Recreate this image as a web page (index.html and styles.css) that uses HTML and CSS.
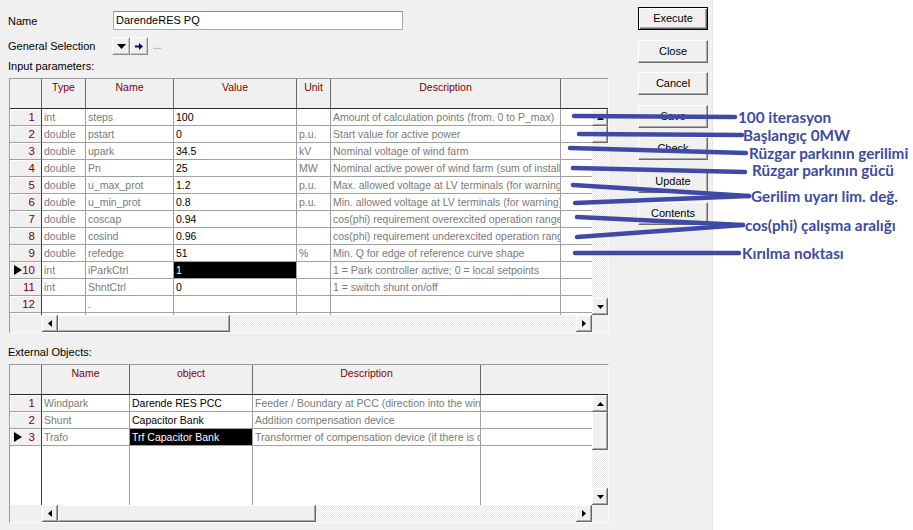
FILE: index.html
```html
<!DOCTYPE html>
<html>
<head>
<meta charset="utf-8">
<link rel="stylesheet" href="styles.css">
</head>
<body>
<div class="screen">
  <div class="dialog">
    <div class="main">
      <div class="name-row">
        <span class="lbl">Name</span>
        <div class="input">DarendeRES PQ</div>
      </div>
      <div class="sel-row">
        <span class="lbl lbl-sel">General Selection</span>
        <span class="tbtn"><svg width="9" height="5" viewBox="0 0 9 5"><polygon points="0,0 9,0 4.5,5" fill="#000"/></svg></span>
        <span class="tbtn"><svg width="8" height="7" viewBox="0 0 8 7"><rect x="0" y="2.5" width="5" height="2" fill="#000080"/><polygon points="4,0 8,3.5 4,7" fill="#000080"/></svg></span>
        <span class="dots">...</span>
      </div>
      <div class="section-lbl">Input parameters:</div>

      <div class="grid">
        <div class="hdr hdr-top">
          <div class="h"></div><div class="h">Type</div><div class="h">Name</div><div class="h">Value</div><div class="h">Unit</div><div class="h">Description</div><div class="h last"></div>
        </div>
        <div class="body body-top">
          <div class="cells cells-top">
            <div class="c n">1</div><div class="c">int</div><div class="c">steps</div><div class="c v">100</div><div class="c"></div><div class="c">Amount of calculation points (from. 0 to P_max)</div><div class="c e"></div>
            <div class="c n">2</div><div class="c">double</div><div class="c">pstart</div><div class="c v">0</div><div class="c">p.u.</div><div class="c">Start value for active power</div><div class="c e"></div>
            <div class="c n">3</div><div class="c">double</div><div class="c">upark</div><div class="c v">34.5</div><div class="c">kV</div><div class="c">Nominal voltage of wind farm</div><div class="c e"></div>
            <div class="c n">4</div><div class="c">double</div><div class="c">Pn</div><div class="c v">25</div><div class="c">MW</div><div class="c">Nominal active power of wind farm (sum of installed units)</div><div class="c e"></div>
            <div class="c n">5</div><div class="c">double</div><div class="c">u_max_prot</div><div class="c v">1.2</div><div class="c">p.u.</div><div class="c">Max. allowed voltage at LV terminals (for warning)</div><div class="c e"></div>
            <div class="c n">6</div><div class="c">double</div><div class="c">u_min_prot</div><div class="c v">0.8</div><div class="c">p.u.</div><div class="c">Min. allowed voltage at LV terminals (for warning)</div><div class="c e"></div>
            <div class="c n">7</div><div class="c">double</div><div class="c">coscap</div><div class="c v">0.94</div><div class="c"></div><div class="c">cos(phi) requirement overexcited operation range</div><div class="c e"></div>
            <div class="c n">8</div><div class="c">double</div><div class="c">cosind</div><div class="c v">0.96</div><div class="c"></div><div class="c">cos(phi) requirement underexcited operation range</div><div class="c e"></div>
            <div class="c n">9</div><div class="c">double</div><div class="c">refedge</div><div class="c v">51</div><div class="c">%</div><div class="c">Min. Q for edge of reference curve shape</div><div class="c e"></div>
            <div class="c n"><i class="mark"></i>10</div><div class="c">int</div><div class="c">iParkCtrl</div><div class="c v sel">1</div><div class="c"></div><div class="c">1 = Park controller active; 0 = local setpoints</div><div class="c e"></div>
            <div class="c n">11</div><div class="c">int</div><div class="c">ShntCtrl</div><div class="c v">0</div><div class="c"></div><div class="c">1 = switch shunt on/off</div><div class="c e"></div>
            <div class="c n">12</div><div class="c"></div><div class="c">.</div><div class="c v"></div><div class="c"></div><div class="c"></div><div class="c e"></div>
            <div class="c n"></div><div class="c"></div><div class="c"></div><div class="c v"></div><div class="c"></div><div class="c"></div><div class="c e"></div>
          </div>
          <div class="vs">
            <div class="sb"><svg width="7" height="4" viewBox="0 0 7 4"><polygon points="0,4 7,4 3.5,0" fill="#000"/></svg></div>
            <div class="sb thumb-v1"></div>
            <div class="track"></div>
            <div class="sb"><svg width="7" height="4" viewBox="0 0 7 4"><polygon points="0,0 7,0 3.5,4" fill="#000"/></svg></div>
          </div>
        </div>
        <div class="hs">
          <div class="blank"></div>
          <div class="sb sbh"><svg width="4" height="7" viewBox="0 0 4 7"><polygon points="4,0 4,7 0,3.5" fill="#000"/></svg></div>
          <div class="sb sbh thumb-h1"></div>
          <div class="track"></div>
          <div class="sb sbh"><svg width="4" height="7" viewBox="0 0 4 7"><polygon points="0,0 0,7 4,3.5" fill="#000"/></svg></div>
          <div class="corner"></div>
        </div>
      </div>

      <div class="section-lbl ext">External Objects:</div>

      <div class="grid">
        <div class="hdr hdr-bot">
          <div class="h"></div><div class="h">Name</div><div class="h">object</div><div class="h">Description</div><div class="h last"></div>
        </div>
        <div class="body body-bot">
          <div class="cells cells-bot">
            <div class="c n">1</div><div class="c">Windpark</div><div class="c v">Darende RES PCC</div><div class="c">Feeder / Boundary at PCC (direction into the wind farm)</div><div class="c e"></div>
            <div class="c n">2</div><div class="c">Shunt</div><div class="c v">Capacitor Bank</div><div class="c">Addition compensation device</div><div class="c e"></div>
            <div class="c n"><i class="mark"></i>3</div><div class="c">Trafo</div><div class="c v sel">Trf Capacitor Bank</div><div class="c">Transformer of compensation device (if there is one)</div><div class="c e"></div>
            <div class="c f fn"></div><div class="c f"></div><div class="c f"></div><div class="c f"></div><div class="c f e"></div>
          </div>
          <div class="vs">
            <div class="sb"><svg width="7" height="4" viewBox="0 0 7 4"><polygon points="0,4 7,4 3.5,0" fill="#000"/></svg></div>
            <div class="sb thumb-v2"></div>
            <div class="track"></div>
            <div class="sb"><svg width="7" height="4" viewBox="0 0 7 4"><polygon points="0,0 7,0 3.5,4" fill="#000"/></svg></div>
          </div>
        </div>
        <div class="hs">
          <div class="blank"></div>
          <div class="sb sbh"><svg width="4" height="7" viewBox="0 0 4 7"><polygon points="4,0 4,7 0,3.5" fill="#000"/></svg></div>
          <div class="sb sbh thumb-h2"></div>
          <div class="track"></div>
          <div class="sb sbh"><svg width="4" height="7" viewBox="0 0 4 7"><polygon points="0,0 0,7 4,3.5" fill="#000"/></svg></div>
          <div class="corner"></div>
        </div>
      </div>
    </div>

    <div class="buttons">
      <div class="btn default">Execute</div>
      <div class="btn">Close</div>
      <div class="btn">Cancel</div>
      <div class="btn">Save</div>
      <div class="btn">Check</div>
      <div class="btn">Update</div>
      <div class="btn">Contents</div>
    </div>
  </div>

  <svg class="annot" width="913" height="530" viewBox="0 0 913 530">
    <g stroke="#3f4aa6" stroke-width="4.5" stroke-linecap="round" fill="none">
      <line x1="574" y1="116" x2="735" y2="117"/>
      <line x1="579" y1="134" x2="742" y2="135"/>
      <line x1="570" y1="148" x2="746" y2="153"/>
      <line x1="573" y1="168" x2="745" y2="172"/>
      <line x1="573" y1="185" x2="749" y2="196"/>
      <line x1="575" y1="203" x2="749" y2="196"/>
      <line x1="577" y1="217" x2="743" y2="225"/>
      <line x1="577" y1="237" x2="743" y2="225"/>
      <line x1="575" y1="253" x2="739" y2="253"/>
    </g>
    <g class="annot-text" fill="#3d4aa3">
      <text x="738" y="117">100 iterasyon</text>
      <text x="743" y="135">Başlangıç 0MW</text>
      <text x="749" y="153">Rüzgar parkının gerilimi</text>
      <text x="752" y="170">Rüzgar parkının gücü</text>
      <text x="751" y="196">Gerilim uyarı lim. değ.</text>
      <text x="745" y="225">cos(phi) çalışma aralığı</text>
      <text x="742" y="253">Kırılma noktası</text>
    </g>
  </svg>
</div>
</body>
</html>
```

FILE: styles.css
```css
* { box-sizing: border-box; }

body {
  margin: 0;
  background: #fff;
  font-family: "Liberation Sans", Arial, sans-serif;
  font-size: 10.5px;
  color: #000;
}

.screen {
  position: relative;
  width: 913px;
  height: 530px;
  overflow: hidden;
}

.dialog {
  width: 713px;
  height: 530px;
  background: #f0f0f0;
  display: flex;
  border-right: 1px solid #e6e6e6;
}

.main {
  width: 638px;
  flex: none;
  padding: 11px 0 0 9px;
  display: flex;
  flex-direction: column;
}

.name-row {
  display: flex;
  align-items: center;
  height: 19px;
}

.lbl {
  width: 105px;
  margin-left: -1px;
  flex: none;
  font-size: 11px;
}

.input {
  width: 290px;
  height: 19px;
  background: #fff;
  border: 1px solid #a9a9a9;
  border-top-color: #8a8a8a;
  padding-left: 2px;
  line-height: 17px;
  font-size: 11px;
}

.sel-row {
  display: flex;
  align-items: center;
  height: 18px;
  margin-top: 7px;
}

.lbl-sel { width: 104px; }

.tbtn {
  width: 18px;
  height: 18px;
  background: #f0f0f0;
  border: 1px solid;
  border-color: #fff #8a8a8a #8a8a8a #fff;
  box-shadow: inset -1px -1px #c8c8c8;
  display: flex;
  align-items: center;
  justify-content: center;
  flex: none;
}

.dots {
  margin-left: 5px;
  color: #777;
  font-size: 10px;
  line-height: 18px;
}

.section-lbl {
  height: 23px;
  padding-top: 4px;
  line-height: 14px;
  margin-left: -1px;
  font-size: 11px;
}

.section-lbl.ext {
  height: 31px;
  padding-top: 12px;
}

.grid {
  width: 600px;
  border: 1px solid;
  border-color: #9a9a9a #fafafa #fafafa #9a9a9a;
  background: #f0f0f0;
}

.hdr {
  display: grid;
  height: 30px;
}

.hdr-top { grid-template-columns: 32px 44px 88px 123px 34px 230px 47px; }
.hdr-bot { grid-template-columns: 32px 88px 123px 228px 127px; }

.h {
  border-right: 1px solid #6a6a6a;
  border-bottom: 1px solid #2a2a2a;
  color: #800000;
  text-align: center;
  padding-top: 1px;
  line-height: 14px;
  white-space: nowrap;
}

.h.last { border-right: none; }

.body { display: flex; }
.body-top { height: 206px; }
.body-bot { height: 110px; }

.cells {
  width: 582px;
  display: grid;
  grid-auto-rows: 17px;
  background: #fff;
  overflow: hidden;
}

.cells-top { grid-template-columns: 32px 44px 88px 123px 34px 230px 31px; }
.cells-bot {
  grid-template-columns: 32px 88px 123px 228px 111px;
  grid-template-rows: 17px 17px 17px 59px;
}

.c {
  border-right: 1px solid #a0a0a0;
  border-bottom: 1px solid #a0a0a0;
  padding: 0 2px;
  line-height: 16px;
  white-space: nowrap;
  overflow: hidden;
  color: #7a7a7a;
}

.c.v { color: #000; }
.c.e { border-right: none; }

.c.n {
  background: #f0f0f0;
  color: #800000;
  text-align: right;
  padding-right: 6px;
  border-right-color: #3a3a3a;
  box-shadow: inset 1px 1px #fff;
  font-size: 11.5px;
}

.c.sel {
  background: #000;
  color: #fff;
}

.c.f { border-bottom: none; }
.c.fn { border-right-color: #3a3a3a; }

.mark {
  float: left;
  width: 0;
  height: 0;
  margin: 3px 0 0 2px;
  border-top: 5px solid transparent;
  border-bottom: 5px solid transparent;
  border-left: 8px solid #000;
}

.vs {
  width: 16px;
  display: flex;
  flex-direction: column;
}

.track {
  flex: 1;
  background: repeating-conic-gradient(#fdfdfd 0 25%, #e9e9e9 0 50%) 0 0 / 2px 2px;
}

.sb {
  width: 16px;
  height: 17px;
  flex: none;
  background: #f0f0f0;
  box-shadow: inset -1px -1px #6a6a6a, inset 1px 1px #fff, inset -2px -2px #a8a8a8;
  display: flex;
  align-items: center;
  justify-content: center;
}

.thumb-v1 { height: 17px; }
.thumb-v2 { height: 38px; }

.hs {
  display: flex;
  height: 17px;
}

.hs .blank {
  width: 32px;
  flex: none;
}

.sbh { width: 16px; height: 17px; }
.thumb-h1 { width: 172px; }
.thumb-h2 { width: 258px; }

.corner {
  width: 16px;
  flex: none;
}

.buttons {
  display: flex;
  flex-direction: column;
  gap: 9.5px;
  padding-top: 7px;
}

.btn {
  width: 70px;
  height: 23px;
  background: #f0f0f0;
  border: 1px solid;
  border-color: #fff #6a6a6a #6a6a6a #fff;
  box-shadow: inset -1px -1px #a8a8a8;
  text-align: center;
  line-height: 20px;
  font-size: 11px;
}

.btn.default {
  border-color: #000;
  box-shadow: inset 1px 1px #fff, inset -1px -1px #6a6a6a, inset -2px -2px #a8a8a8;
}

.annot {
  position: absolute;
  left: 0;
  top: 0;
  pointer-events: none;
}

.annot-text text {
  font-family: Lato, "Open Sans", sans-serif;
  font-weight: 700;
  font-size: 15.3px;
  dominant-baseline: central;
}
```
